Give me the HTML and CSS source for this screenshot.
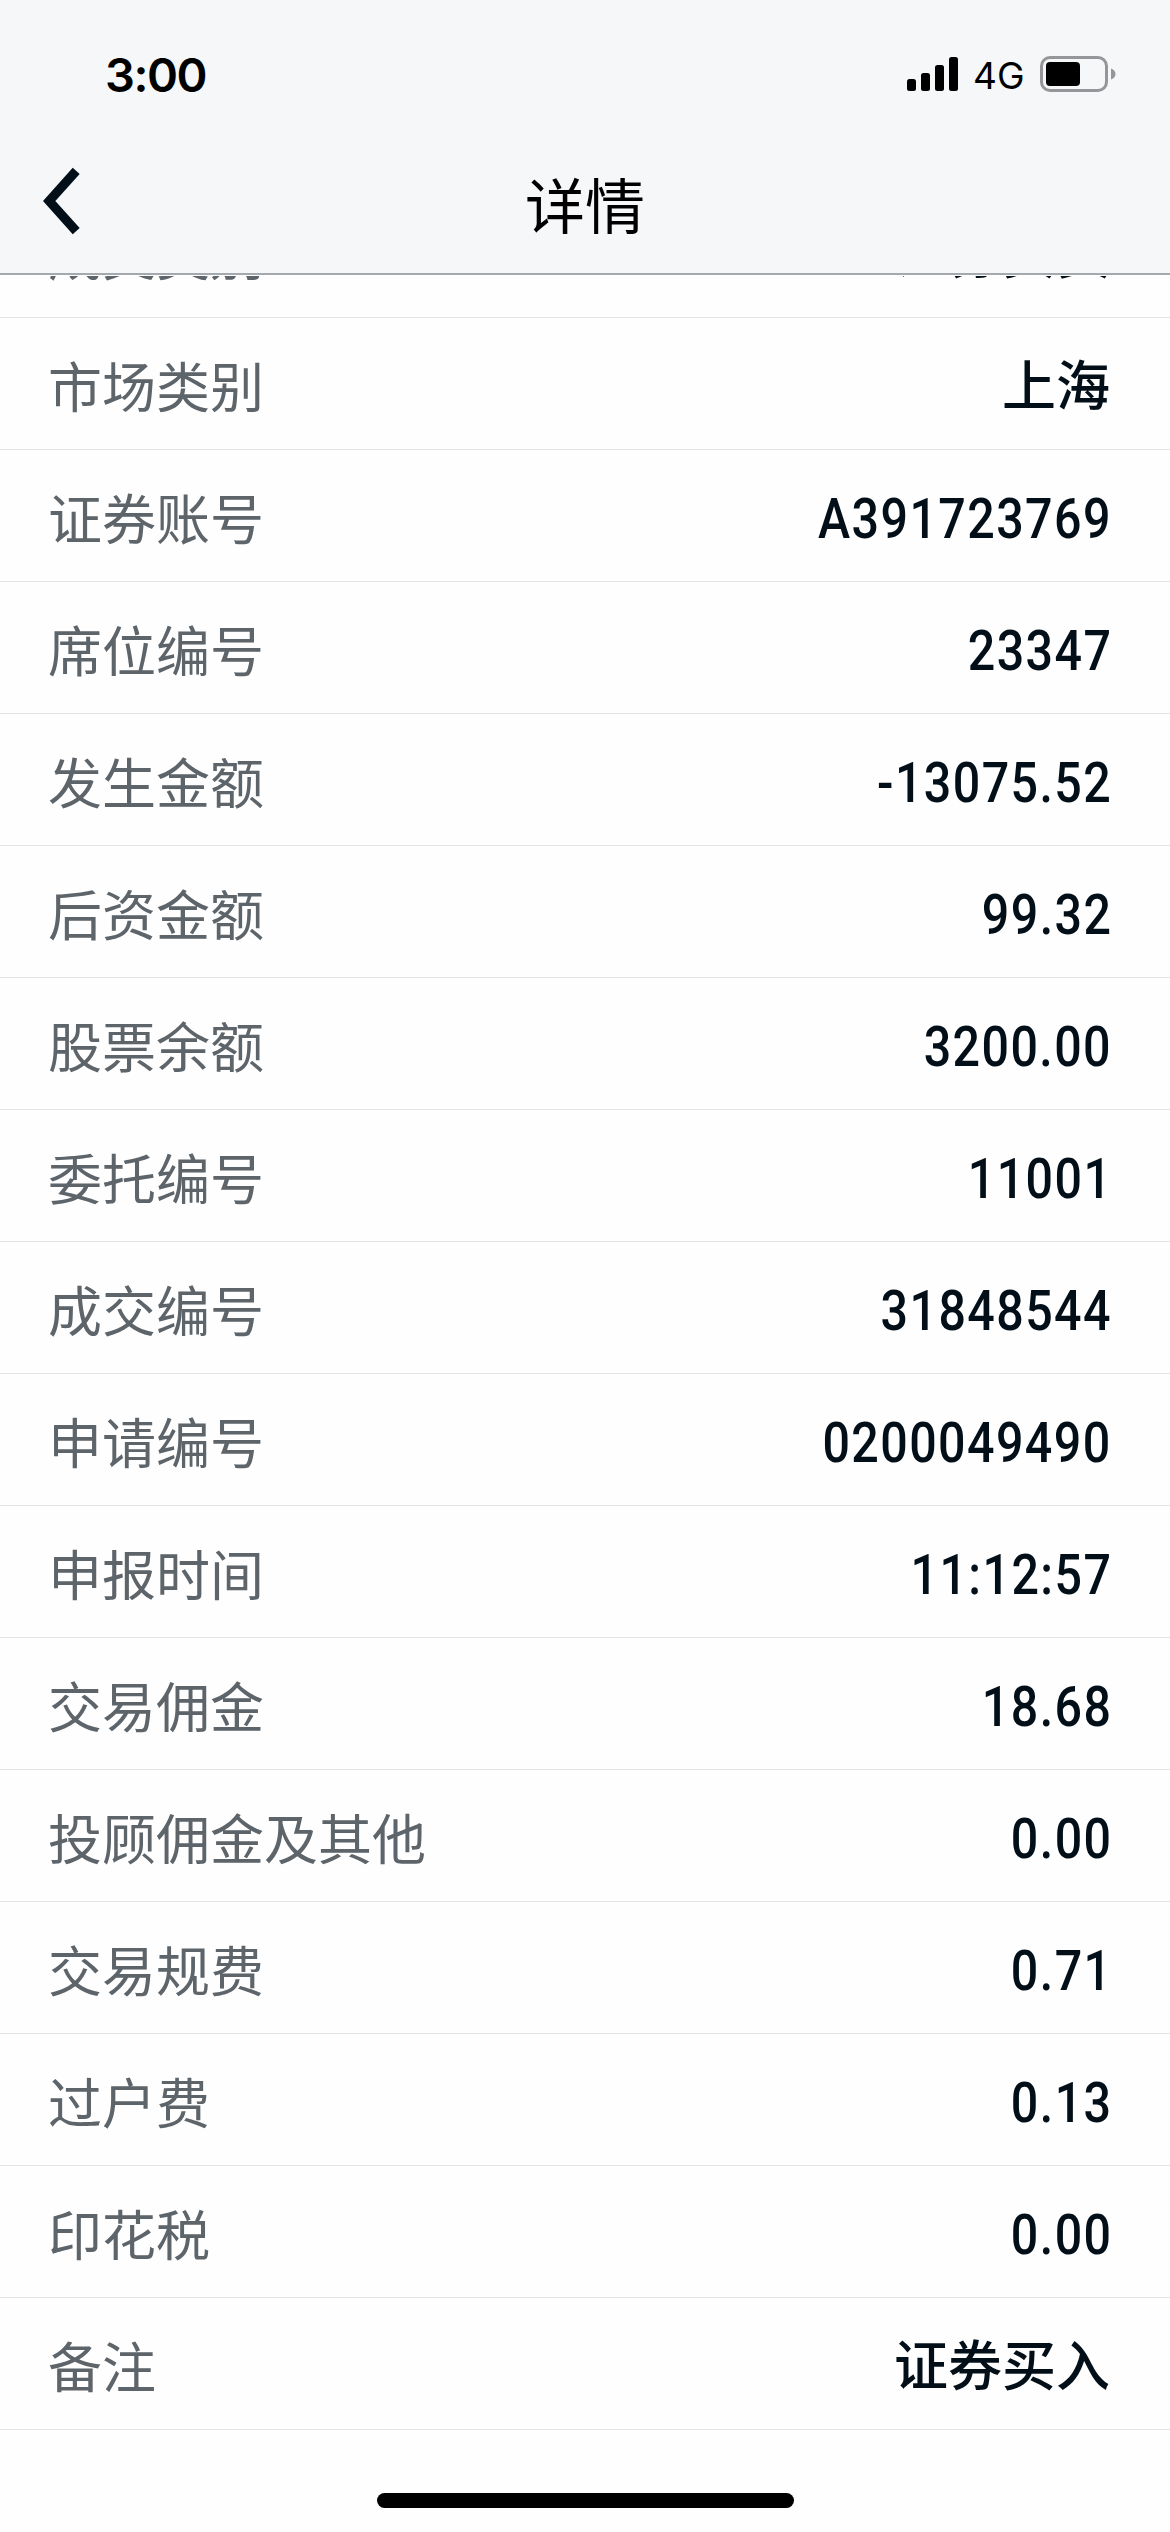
FILE: index.html
```html
<!DOCTYPE html>
<html lang="zh-CN">

<head>
  <meta charset="UTF-8">
  <meta name="viewport" content="width=device-width, initial-scale=1.0">
  <title>详情</title>
  <link rel="stylesheet" href="styles.css">
</head>

<body>
  <header class="header">
    <div class="status-bar">
      <span class="time">3:00</span>
      <div class="status-icons">
        <svg class="signal" width="51" height="34" viewBox="0 0 51 34">
          <rect x="0" y="22" width="9" height="12" rx="2.5" />
          <rect x="14" y="16" width="9" height="18" rx="2.5" />
          <rect x="28" y="8" width="9" height="26" rx="2.5" />
          <rect x="42" y="0" width="9" height="34" rx="2.5" />
        </svg>
        <span class="network">4G</span>
        <svg class="battery" width="76" height="36" viewBox="0 0 76 36">
          <rect x="1.5" y="1.5" width="65" height="33" rx="8.5" fill="none" stroke="#959699" stroke-width="3" />
          <rect x="6" y="6" width="34" height="24" rx="4" />
          <path d="M71 12.5c3 1 4.5 3 4.5 5.5s-1.5 4.5-4.5 5.5z" fill="#959699" />
        </svg>
      </div>
    </div>
    <div class="nav-bar">
      <svg class="back" width="38" height="70" viewBox="0 0 38 70">
        <path d="M33.2 4.8L6.2 35L33.2 65.2" fill="none" stroke="#020f18" stroke-width="9.3" />
      </svg>
      <h1>详情</h1>
    </div>
  </header>

  <main class="list">
    <div class="row"><span class="label">成交类别</span><span class="value text">证券买卖</span></div>
    <div class="row"><span class="label">市场类别</span><span class="value text">上海</span></div>
    <div class="row"><span class="label">证券账号</span><span class="value">A391723769</span></div>
    <div class="row"><span class="label">席位编号</span><span class="value">23347</span></div>
    <div class="row"><span class="label">发生金额</span><span class="value">-13075.52</span></div>
    <div class="row"><span class="label">后资金额</span><span class="value">99.32</span></div>
    <div class="row"><span class="label">股票余额</span><span class="value">3200.00</span></div>
    <div class="row"><span class="label">委托编号</span><span class="value">11001</span></div>
    <div class="row"><span class="label">成交编号</span><span class="value">31848544</span></div>
    <div class="row"><span class="label">申请编号</span><span class="value">0200049490</span></div>
    <div class="row"><span class="label">申报时间</span><span class="value">11:12:57</span></div>
    <div class="row"><span class="label">交易佣金</span><span class="value">18.68</span></div>
    <div class="row"><span class="label">投顾佣金及其他</span><span class="value">0.00</span></div>
    <div class="row"><span class="label">交易规费</span><span class="value">0.71</span></div>
    <div class="row"><span class="label">过户费</span><span class="value">0.13</span></div>
    <div class="row"><span class="label">印花税</span><span class="value">0.00</span></div>
    <div class="row"><span class="label">备注</span><span class="value text">证券买入</span></div>
  </main>

  <div class="home-indicator"></div>
</body>

</html>
```
FILE: styles.css
```css
* {
  box-sizing: border-box;
}

body {
  margin: 0;
  height: 2532px;
  overflow: hidden;
  background-color: #fefefe;
  font-family: "Noto Sans CJK SC", sans-serif;
}

.header {
  position: relative;
  z-index: 1;
  height: 275px;
  background-color: #f5f7f9;
  border-bottom: 2px solid #a3a9ae;
  box-shadow: 0 1px 0 #fefefe;
}

.status-bar {
  display: flex;
  justify-content: space-between;
  height: 148px;
  padding: 0 54px 0 105px;
  font-family: Inter, sans-serif;
  color: #000;
}

.time {
  padding-top: 46px;
  font-size: 47px;
  line-height: 57px;
  font-weight: 600;
  letter-spacing: -1.5px;
}

.status-icons {
  display: flex;
  align-items: center;
  height: 148px;
}

.network {
  width: 82px;
  padding-left: 15px;
  padding-top: 4px;
  font-size: 37px;
  line-height: 44px;
}

.nav-bar {
  display: grid;
  grid-template-columns: 120px 1fr 120px;
  height: 125px;
}

.back {
  margin: 18px 0 0 43px;
}

h1 {
  margin: 0;
  padding-top: 11px;
  font-size: 60px;
  line-height: 88px;
  font-weight: 400;
  text-align: center;
  color: #000;
}

/* list is scrolled, the first row sits partly under the header */
.list {
  margin-top: -89px;
}

.row {
  display: flex;
  justify-content: space-between;
  height: 132px;
  padding: 0 60px 0 48px;
  border-bottom: 1px solid #e2e3e4;
  line-height: 80px;
}

.label {
  padding-top: 27px;
  font-size: 54px;
  color: #5d646a;
}

/* narrow, evenly spaced digits */
.value {
  margin-right: -2px;
  padding-top: 29px;
  font-family: Roboto, sans-serif;
  font-size: 55px;
  font-weight: 500;
  letter-spacing: 1.6px;
  color: #020f18;
  transform: scaleX(0.88);
  transform-origin: right;
}

.value.text {
  margin-right: 0;
  padding-top: 25px;
  font-family: "Noto Sans CJK SC", sans-serif;
  font-size: 54px;
  letter-spacing: 0;
  transform: none;
}

.home-indicator {
  width: 417px;
  height: 15px;
  margin: 63px auto 0;
  border-radius: 8px;
  background-color: #000;
}
```
